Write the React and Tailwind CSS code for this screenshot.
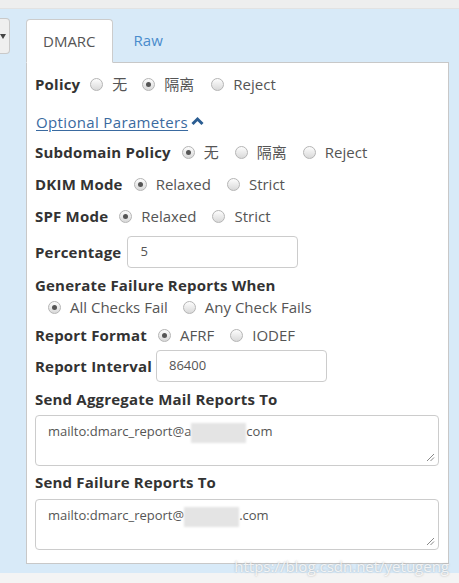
import React from "react";

const Radio = ({ checked }) => (
  <span className="relative inline-block w-[13px] h-[13px] rounded-full border border-[#b5b5b5] bg-gradient-to-b from-[#fdfdfd] to-[#d9d9d9] shrink-0">
    {checked && (
      <span className="absolute left-[3px] top-[3px] w-[5px] h-[5px] rounded-full bg-[#555]" />
    )}
  </span>
);

const Option = ({ label, checked, className = "" }) => (
  <span className={`flex items-center ${className}`}>
    <Radio checked={checked} />
    <span className="ml-[9px] text-[15px] text-[#555]">{label}</span>
  </span>
);

const Label = ({ children, className = "" }) => (
  <span className={`font-bold text-[15px] tracking-[0.2px] text-[#333] ${className}`}>{children}</span>
);

const Grip = () => (
  <svg className="absolute right-[3px] bottom-[3px]" width="9" height="9" viewBox="0 0 9 9">
    <path d="M1 8 L8 1 M4.5 8 L8 4.5" stroke="#888" strokeWidth="1" />
  </svg>
);

const MailBox = ({ pre, post, className = "" }) => (
  <div className={`relative h-[51px] border border-[#ccc] rounded-[4px] pl-[12px] pt-[6px] text-[13px] text-[#555] flex items-start ${className}`}>
    <span>{pre}</span>
    <span className="inline-block w-[55px] h-[20px] bg-[#e4e4e4] blur-[1px] mt-[1px]" />
    <span>{post}</span>
    <Grip />
  </div>
);

export default function App() {
  return (
    <div
      className="relative w-[459px] h-[583px] flex flex-col overflow-hidden"
      style={{ fontFamily: '"Open Sans", "Noto Sans CJK SC", sans-serif' }}
    >
      <div className="h-[9px] bg-[#eeeeee] border-b border-[#e2e2e2]" />
      <div className="flex-1 bg-[#d8eaf8] flex pt-[9px]">
        <div className="w-[10px] h-[36px] bg-[#efefef] border border-l-0 border-[#c9c9c9] rounded-r-[4px] flex items-center">
          <svg width="6" height="5" viewBox="0 0 6 5">
            <path d="M0 0 L6 0 L3 5 Z" fill="#444" />
          </svg>
        </div>
        <div className="ml-[16px] w-[423px] flex flex-col">
          <div className="flex h-[44px] items-end">
            <div className="relative z-10 -mb-px h-[44px] px-[16px] bg-white border border-[#ccc] border-b-white rounded-t-[4px] flex items-center text-[15px] text-[#555]">
              DMARC
            </div>
            <div className="ml-[4px] h-[43px] px-[17px] flex items-center text-[15px] text-[#4a8ccc]">
              Raw
            </div>
          </div>
          <div className="h-[502px] bg-white border border-[#c8c8c8] pl-[8px] pr-[9px] pt-[11px]">
            <div className="flex items-center h-[20px]">
              <Label>Policy</Label>
              <Option label="无" className="ml-[10px]" />
              <Option label="隔离" checked className="ml-[15px]" />
              <Option label="Reject" className="ml-[17px]" />
            </div>
            <div className="flex items-center h-[20px] mt-[18px]">
              <span className="text-[15px] tracking-[0.35px] text-[#3a6aa0] underline underline-offset-2 pl-px">Optional Parameters</span>
              <svg width="13" height="10" viewBox="0 0 13 10" className="ml-[3px] -mt-[3px]">
                <path d="M1.5 8 L6.5 3 L11.5 8" stroke="#2b5d92" strokeWidth="3" fill="none" />
              </svg>
            </div>
            <div className="flex items-center h-[20px] mt-[10px]">
              <Label>Subdomain Policy</Label>
              <Option label="无" checked className="ml-[11px]" />
              <Option label="隔离" className="ml-[16px]" />
              <Option label="Reject" className="ml-[16px]" />
            </div>
            <div className="flex items-center h-[20px] mt-[12px]">
              <Label>DKIM Mode</Label>
              <Option label="Relaxed" checked className="ml-[11px]" />
              <Option label="Strict" className="ml-[16px]" />
            </div>
            <div className="flex items-center h-[20px] mt-[12px]">
              <Label>SPF Mode</Label>
              <Option label="Relaxed" checked className="ml-[11px]" />
              <Option label="Strict" className="ml-[16px]" />
            </div>
            <div className="flex items-center h-[32px] mt-[10px]">
              <Label>Percentage</Label>
              <div className="ml-[6px] w-[171px] h-[32px] border border-[#ccc] rounded-[4px] flex items-center pl-[12px] text-[13px] text-[#555]">
                5
              </div>
            </div>
            <div className="flex items-center h-[20px] mt-[7px]">
              <Label>Generate Failure Reports When</Label>
            </div>
            <div className="flex items-center h-[20px] mt-[2px] pl-[13px]">
              <Option label="All Checks Fail" checked />
              <Option label="Any Check Fails" className="ml-[15px]" />
            </div>
            <div className="flex items-center h-[20px] mt-[8px]">
              <Label>Report Format</Label>
              <Option label="AFRF" checked className="ml-[11px]" />
              <Option label="IODEF" className="ml-[16px]" />
            </div>
            <div className="flex items-center h-[32px] mt-[5px]">
              <Label>Report Interval</Label>
              <div className="ml-[4px] w-[171px] h-[32px] border border-[#ccc] rounded-[4px] flex items-center pl-[12px] text-[13px] text-[#555]">
                86400
              </div>
            </div>
            <div className="flex items-center h-[20px] mt-[7px]">
              <Label>Send Aggregate Mail Reports To</Label>
            </div>
            <MailBox pre="mailto:dmarc_report@a" post="com" className="mt-[6px]" />
            <div className="flex items-center h-[20px] mt-[6px]">
              <Label>Send Failure Reports To</Label>
            </div>
            <MailBox pre="mailto:dmarc_report@" post=".com" className="mt-[7px]" />
          </div>
        </div>
      </div>
      <div className="h-[10px] bg-[#f4f4f4]" />
      <span
        className="absolute right-[10px] bottom-[6px] text-[15px] text-white/80"
        style={{ textShadow: "0 0 2px rgba(120,120,120,0.6)" }}
      >
        https://blog.csdn.net/yetugeng
      </span>
    </div>
  );
}
